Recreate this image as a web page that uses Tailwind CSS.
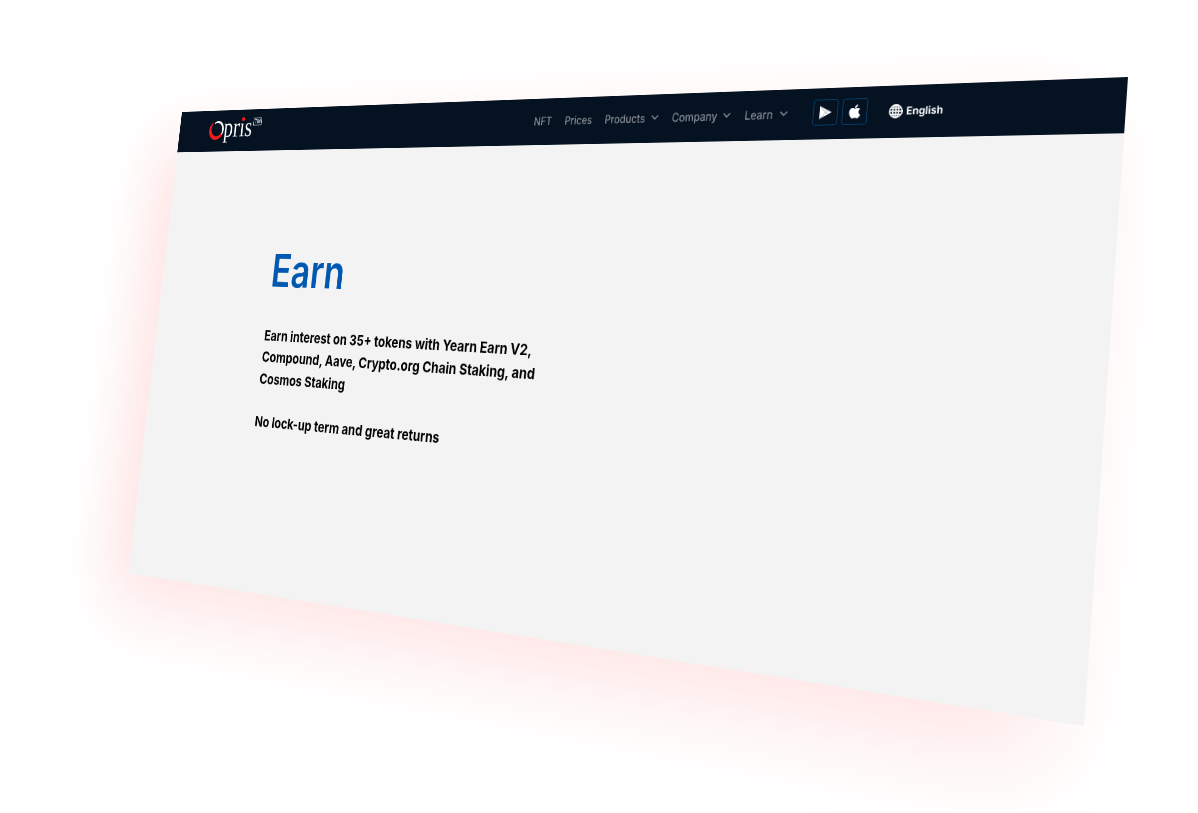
<!DOCTYPE html>
<html lang="en">
<head>
<meta charset="utf-8">
<title>Opris – Earn</title>
<script src="https://cdn.jsdelivr.net/npm/@tailwindcss/browser@4"></script>
</head>
<body class="bg-white font-[Inter,sans-serif]">
<div class="h-[813px] w-[1198px] overflow-hidden">
<div class="h-[660px] w-[1320px] origin-top-left bg-[#f3f3f3] shadow-[-40px_40px_100px_rgba(255,0,0,0.11)] [transform:matrix3d(0.473867,-0.0430894,0,-0.000215248,-0.086383,0.678050,0,-0.0000356621,0,0,1,0,182,112,0,1)]">
  <header class="flex h-[59px] items-start bg-[#051221] pl-[57px]">
    <!-- logo -->
    <div class="flex h-[59px] w-[99px] items-start">
      <svg class="mt-[15px] h-[27px] w-[27px] shrink-0" viewBox="0 0 27 27">
        <path fill="#f21d1d" fill-rule="evenodd" d="M9 1C3 3 0 8 0 14c0 8 6 13 13 13s13-5 13-13c0-2 0-4-1-5-1 8-5 13-10 13C8 22 4 17 4 11 4 7 6 3 9 1Z"/>
        <path fill="#fff" d="M9 3c2-2 4-3 7-3 6 0 11 5 11 12 0 4-1 7-4 9 1-3 1-5 1-8 0-6-4-10-9-10-2 0-4 0-6 2Z"/>
      </svg>
      <div class="relative mt-[2px] w-[54px] shrink-0">
        <span class="block origin-left scale-x-[0.88] font-['Liberation_Serif',serif] text-[40px] leading-[46px] whitespace-nowrap text-white">prıs</span>
        <span class="absolute top-[9px] left-[32px] h-[5px] w-[6px] rounded-full bg-[#f21d1d]"></span>
      </div>
      <span class="mt-[12px] flex h-[11px] w-[15px] shrink-0 items-center justify-center border border-gray-300 text-[7px] leading-none font-medium text-white">TM</span>
    </div>
    <!-- navigation -->
    <nav class="ml-[445px] flex h-[59px] pt-[18px] text-[14.500px] leading-[21px] font-medium whitespace-nowrap text-[#858b93]">
      <a class="w-[45px]"><span class="block origin-left scale-x-[0.91]">NFT</span></a>
      <a class="w-[57px]"><span class="block origin-left scale-x-[0.9]">Prices</span></a>
      <a class="flex w-[92px]"><span class="w-[64px] origin-left scale-x-[0.9]">Products</span><svg class="mt-[7px] h-[6px] w-[10px]" viewBox="0 0 10 6" fill="none" stroke="currentColor" stroke-width="1.6"><path d="M.7.7 5 5 9.300.7"/></svg></a>
      <a class="flex w-[95px]"><span class="w-[67px] origin-left scale-x-[0.9]">Company</span><svg class="mt-[7px] h-[6px] w-[10px]" viewBox="0 0 10 6" fill="none" stroke="currentColor" stroke-width="1.6"><path d="M.7.7 5 5 9.300.7"/></svg></a>
      <a class="flex w-[84px]"><span class="w-[44px] origin-left scale-x-[0.9]">Learn</span><svg class="mt-[7px] h-[6px] w-[10px]" viewBox="0 0 10 6" fill="none" stroke="currentColor" stroke-width="1.6"><path d="M.7.7 5 5 9.300.7"/></svg></a>
    </nav>
    <!-- stores -->
    <div class="mt-[13px] ml-px flex gap-[5px]">
      <span class="flex h-[30px] w-[30px] items-center justify-center rounded-[3px] border border-[#06406f]">
        <svg class="h-[16px] w-[16px]" viewBox="0 0 16 16"><path fill="#fff" d="M1 .5v15L15.500 8Z"/><path stroke="#8c949d" stroke-width=".8" fill="none" d="M1 .5 11 10.500M1 15.500 11 5.500"/></svg>
      </span>
      <span class="flex h-[30px] w-[30px] items-center justify-center rounded-[3px] border border-[#06406f]">
        <svg class="h-[18px] w-[16px]" viewBox="0 0 384 512" fill="#fff"><path d="M318.700 268.700c-.2-36.700 16.400-64.400 50-84.800-18.800-26.900-47.200-41.700-84.700-44.600-35.500-2.800-74.300 20.700-88.500 20.700-15 0-49.400-19.700-76.400-19.700C63.300 141.200 4 184.800 4 273.500q0 39.300 14.400 81.200c12.800 36.700 59 126.700 107.200 125.200 25.200-.6 43-17.900 75.800-17.900 31.800 0 48.300 17.900 76.400 17.900 48.600-.7 90.400-82.500 102.600-119.300-65.200-30.700-61.700-90-61.700-91.900zm-56.600-164.200c27.300-32.400 24.800-61.900 24-72.500-24.100 1.400-52 16.400-67.900 34.900-17.500 19.800-27.800 44.300-25.600 71.900 26.100 2 49.900-11.400 69.500-34.300z"/></svg>
      </span>
    </div>
    <!-- language -->
    <div class="ml-[25px] flex pt-[21px] text-[12px] leading-[16px] font-bold text-white">
      <svg class="mr-[4px] h-[16px] w-[16px]" viewBox="0 0 16 16" fill="none" stroke="#fff" stroke-width="1.500"><circle cx="8" cy="8" r="7.200"/><ellipse cx="8" cy="8" rx="3.500" ry="7.200"/><path d="M8 .7v14.600M.7 8h14.600M1.700 4.500h12.600M1.700 11.500h12.600"/></svg>
      <span class="origin-left scale-x-[0.97]">English</span>
    </div>
  </header>
  <main class="pl-[201px]">
    <h1 class="origin-left scale-x-[0.93] pt-[129px] text-[62px] leading-[75px] font-semibold text-[#0058b0]">Earn</h1>
    <p class="mt-[38px] origin-left scale-x-[0.973] text-[19px] leading-[29.300px] font-bold whitespace-nowrap text-black">Earn interest on 35+ tokens with Yearn Earn V2,<br>Compound, Aave, Crypto.org Chain Staking, and<br>Cosmos Staking<br><br>No lock-up term and great returns</p>
  </main>
</div>
</div>
</body>
</html>
